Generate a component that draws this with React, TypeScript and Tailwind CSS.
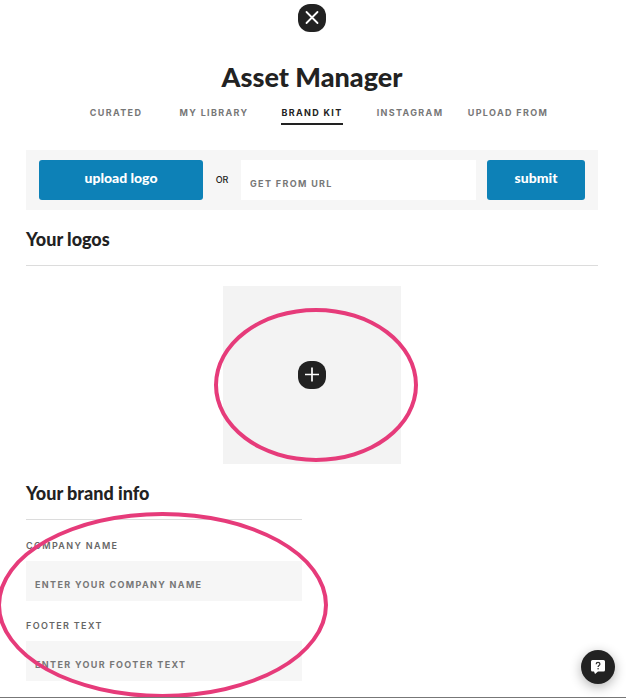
import React from 'react';

const TABS = ['Curated', 'My Library', 'Brand Kit', 'Instagram', 'Upload From'];

const FIELDS = [
  { id: 'company-name', label: 'Company name', placeholder: 'ENTER YOUR COMPANY NAME' },
  { id: 'footer-text', label: 'Footer text', placeholder: 'ENTER YOUR FOOTER TEXT' },
];

function SectionTitle({ children }: { children: React.ReactNode }) {
  return (
    <h2 className="border-b border-[#dcdcdc] pb-3.5 font-['Lato',sans-serif] text-lg leading-6 font-black text-[#222]">
      {children}
    </h2>
  );
}

export default function App() {
  return (
    <div className="relative min-h-screen overflow-hidden border-b border-[#777] bg-white pt-1 pr-7 pb-4 pl-[26px] font-['Inter',sans-serif] text-[#222]">
      {/* Header */}
      <header className="flex flex-col items-center">
        <button
          type="button"
          aria-label="Close"
          className="flex size-7 items-center justify-center rounded-[12px] bg-[#222] text-white"
        >
          <svg className="size-7" viewBox="0 0 28 28" fill="none" stroke="currentColor" strokeWidth="1.8" strokeLinecap="round">
            <path d="M8.5 8l11 11M19.5 8l-11 11" />
          </svg>
        </button>
        <h1 className="mt-[27px] text-center font-['Lato',sans-serif] text-[27px] leading-9 font-black">
          Asset Manager
        </h1>
        <nav className="mt-2.5 grid w-full max-w-[490px] grid-cols-5">
          {TABS.map((tab) => (
            <a
              key={tab}
              href="#"
              aria-current={tab === 'Brand Kit' ? 'page' : undefined}
              className={
                tab === 'Brand Kit'
                  ? 'justify-self-center border-b-2 border-[#222] pb-0.5 text-[9px] leading-4 font-bold tracking-[0.15em] whitespace-nowrap text-[#222] uppercase'
                  : 'justify-self-center border-b-2 border-transparent pb-0.5 text-[9px] leading-4 font-bold tracking-[0.15em] whitespace-nowrap text-[#777] uppercase'
              }
            >
              {tab}
            </a>
          ))}
        </nav>
      </header>

      <main>
        {/* Upload bar */}
        <form className="mt-[25px] flex items-center bg-[#f6f6f6] px-[13px] py-2.5" onSubmit={(e) => e.preventDefault()}>
          <button
            type="button"
            className="h-10 w-[164px] shrink-0 rounded-[3px] bg-[#0d81b7] pb-1 font-['Lato',sans-serif] text-sm font-black text-white"
          >
            upload logo
          </button>
          <span className="w-[38px] shrink-0 text-center text-[9px] font-medium">OR</span>
          <input
            type="url"
            aria-label="Get from URL"
            placeholder="GET FROM URL"
            className="h-10 min-w-0 flex-1 bg-white px-[9px] pt-1.5 text-[9px] font-bold tracking-[0.15em] outline-none placeholder:text-[#777]"
          />
          <button
            type="submit"
            className="ml-[11px] h-10 w-[98px] shrink-0 rounded-[3px] bg-[#0d81b7] pb-1 font-['Lato',sans-serif] text-sm font-black text-white"
          >
            submit
          </button>
        </form>

        {/* Logos */}
        <section className="mt-[17px]">
          <SectionTitle>Your logos</SectionTitle>
          <div className="relative mx-auto mt-5 flex size-[178px] items-center justify-center bg-[#f3f3f3]">
            <button
              type="button"
              aria-label="Add logo"
              className="flex size-7 items-center justify-center rounded-[12px] bg-[#222] text-white"
            >
              <svg className="size-7" viewBox="0 0 28 28" fill="none" stroke="currentColor" strokeWidth="1.7">
                <path d="M14 6.5v14M7 13.5h14" />
              </svg>
            </button>
            <div className="pointer-events-none absolute top-[22px] -left-[9px] h-[154px] w-[204px] rounded-[50%] border-4 border-[#e63b7a]" />
          </div>
        </section>

        {/* Brand info */}
        <section className="relative mt-[17px] w-[276px] max-w-full">
          <SectionTitle>Your brand info</SectionTitle>
          <div className="mt-[18px] flex flex-col gap-[17px]">
            {FIELDS.map((field) => (
              <div key={field.id} className="flex flex-col">
                <label
                  htmlFor={field.id}
                  className="text-[9px] leading-4 font-semibold tracking-[0.15em] text-[#666] uppercase"
                >
                  {field.label}
                </label>
                <input
                  id={field.id}
                  type="text"
                  placeholder={field.placeholder}
                  className="mt-[7px] h-10 bg-[#f6f6f6] px-[9px] pt-1.5 text-[9px] font-bold tracking-[0.15em] outline-none placeholder:text-[#777]"
                />
              </div>
            ))}
          </div>
          <div className="pointer-events-none absolute top-[31px] -left-[29px] h-[186px] w-[331px] rounded-[50%] border-4 border-[#e63b7a]" />
        </section>
      </main>

      {/* Help */}
      <button
        type="button"
        aria-label="Help"
        className="fixed right-[11px] bottom-3.5 flex size-[34px] items-center justify-center rounded-full bg-[#222] text-white shadow-[0_3px_12px_rgba(0,0,0,0.3)]"
      >
        <svg className="size-[34px]" viewBox="0 0 34 34" fill="none">
          <path d="M11.5 10h11a1.5 1.5 0 0 1 1.5 1.5v8.5a1.5 1.5 0 0 1-1.5 1.5h-5.5l-3 2.5-1-2.5h-1.5a1.5 1.5 0 0 1-1.5-1.5v-8.5a1.5 1.5 0 0 1 1.5-1.5z" fill="#fff" />
          <path d="M15.2 14.2c0-2.400 3.700-2.300 3.700-.1 0 1.500-1.800 1.400-1.800 2.800" stroke="#333" strokeWidth="1.3" />
          <circle cx="17.1" cy="18.7" r=".8" fill="#333" />
        </svg>
      </button>
    </div>
  );
}
